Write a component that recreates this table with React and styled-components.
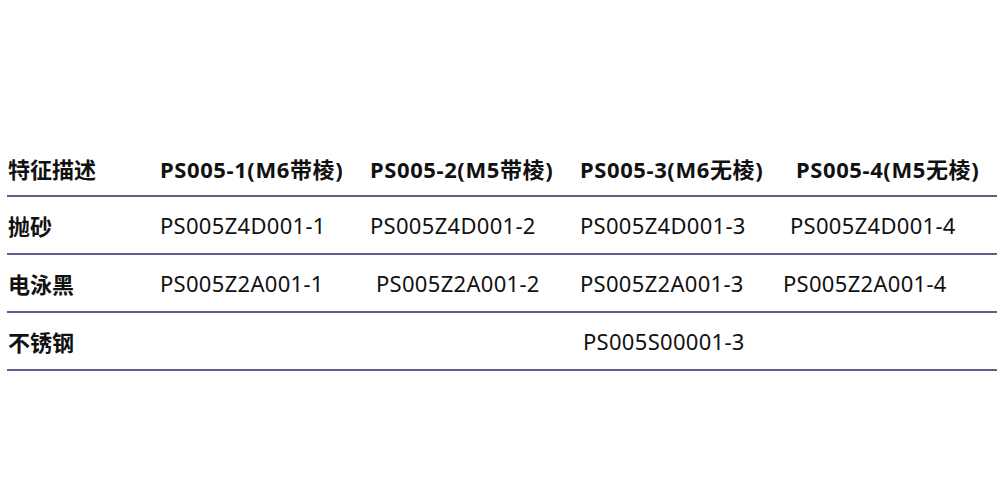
import React from 'react'
import styled, { createGlobalStyle } from 'styled-components'

const GlobalStyle = createGlobalStyle`
  html, body {
    margin: 0;
    padding: 0;
    background: #fff;
  }
  body {
    font-family: "Noto Sans", "Noto Sans CJK SC", sans-serif;
    color: #111;
  }
`

const Wrapper = styled.section`
  width: 1000px;
  height: 500px;
  padding-top: 140px;
  box-sizing: border-box;
`

const Table = styled.div`
  margin: 0 3px 0 7px;
`

const Row = styled.div`
  display: grid;
  grid-template-columns: 153px 210px 210px 210px 1fr;
  height: ${p => (p.$head ? 55 : 56)}px;
  align-items: center;
  border-bottom: 2px solid #5c5f8c;
  font-size: 22px;
`

const Label = styled.div`
  padding-left: 1px;
  font-weight: 700;
`

const Cell = styled.div`
  margin-left: ${p => p.$offset || 0}px;
  font-weight: ${p => (p.$bold ? 700 : 400)};
  letter-spacing: ${p => (p.$bold ? 0.6 : 0.3)}px;
  white-space: nowrap;
`

const head = [
  { text: 'PS005-1(M6带棱)', offset: 0 },
  { text: 'PS005-2(M5带棱)', offset: 0 },
  { text: 'PS005-3(M6无棱)', offset: 0 },
  { text: 'PS005-4(M5无棱)', offset: 6 },
]

const rows = [
  {
    label: '抛砂',
    cells: [
      { text: 'PS005Z4D001-1', offset: 0 },
      { text: 'PS005Z4D001-2', offset: 0 },
      { text: 'PS005Z4D001-3', offset: 0 },
      { text: 'PS005Z4D001-4', offset: 0 },
    ],
  },
  {
    label: '电泳黑',
    cells: [
      { text: 'PS005Z2A001-1', offset: 0 },
      { text: 'PS005Z2A001-2', offset: 6 },
      { text: 'PS005Z2A001-3', offset: 0 },
      { text: 'PS005Z2A001-4', offset: -7 },
    ],
  },
  {
    label: '不锈钢',
    cells: [
      { text: '', offset: 0 },
      { text: '', offset: 0 },
      { text: 'PS005S00001-3', offset: 3 },
      { text: '', offset: 0 },
    ],
  },
]

const App = () => {
  return (
    <Wrapper>
      <GlobalStyle />
      <Table>
        <Row $head>
          <Label>特征描述</Label>
          {head.map((h, i) => (
            <Cell key={i} $bold $offset={h.offset}>{h.text}</Cell>
          ))}
        </Row>
        {rows.map(r => (
          <Row key={r.label}>
            <Label>{r.label}</Label>
            {r.cells.map((c, i) => (
              <Cell key={i} $offset={c.offset}>{c.text}</Cell>
            ))}
          </Row>
        ))}
      </Table>
    </Wrapper>
  )
}

export default App
